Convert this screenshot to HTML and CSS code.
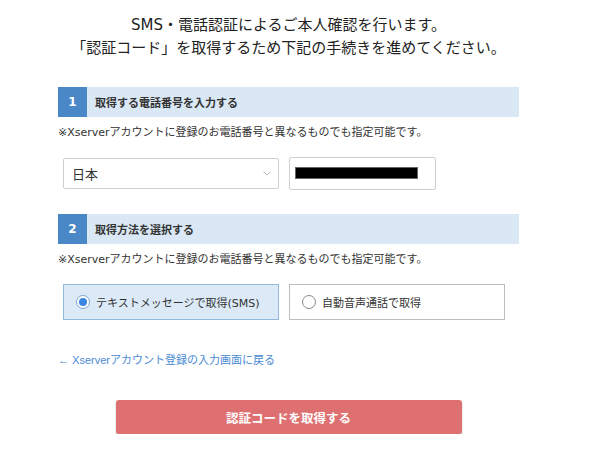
FILE: index.html
```html
<!DOCTYPE html>
<html lang="ja">
<head>
<meta charset="utf-8">
<link rel="stylesheet" href="styles.css">
</head>
<body>
<div class="page">
  <h1 class="title">SMS・電話認証によるご本人確認を行います。<br>「認証コード」を取得するため下記の手続きを進めてください。</h1>

  <div class="sec-head">
    <span class="num">1</span>
    <span class="sec-title">取得する電話番号を入力する</span>
  </div>
  <p class="note">※Xserverアカウントに登録のお電話番号と異なるものでも指定可能です。</p>
  <div class="row">
    <div class="select">
      <span>日本</span>
      <svg class="chev" width="8" height="5" viewBox="0 0 8 5"><path d="M0.5 0.5 L4 4 L7.5 0.5" fill="none" stroke="#b5b5b5" stroke-width="1"/></svg>
    </div>
    <div class="input"><span class="redact"></span></div>
  </div>

  <div class="sec-head sec2">
    <span class="num">2</span>
    <span class="sec-title">取得方法を選択する</span>
  </div>
  <p class="note">※Xserverアカウントに登録のお電話番号と異なるものでも指定可能です。</p>
  <div class="row radios">
    <label class="opt active"><span class="radio on"></span>テキストメッセージで取得(SMS)</label>
    <label class="opt"><span class="radio"></span>自動音声通話で取得</label>
  </div>

  <a class="back">← Xserverアカウント登録の入力画面に戻る</a>

  <div class="btn-wrap"><button class="btn">認証コードを取得する</button></div>
</div>
</body>
</html>
```

FILE: styles.css
```css
* { box-sizing: border-box; }
body {
  margin: 0;
  background: #fff;
  color: #333;
  font-family: "DejaVu Sans", "Noto Sans CJK JP", sans-serif;
  text-spacing-trim: space-all;
}
.page {
  width: 461px;
  margin-left: 58px;
  padding-top: 14px;
}
.title {
  margin: 0;
  font-size: 15px;
  font-weight: normal;
  line-height: 23px;
  text-align: center;
  white-space: nowrap;
  color: #222;
}
.sec-head {
  margin-top: 27px;
  height: 30px;
  background: #dae8f5;
  display: flex;
  align-items: center;
}
.sec2 { margin-top: 24px; }
.num {
  width: 29px;
  height: 30px;
  background: #4a87c7;
  color: #fff;
  font-weight: bold;
  font-size: 12px;
  display: flex;
  align-items: center;
  justify-content: center;
}
.sec-title {
  margin-left: 8px;
  font-size: 11px;
  font-weight: bold;
  color: #333;
}
.note {
  margin: 8px 0 0;
  font-size: 11px;
  line-height: 16px;
  color: #333;
}
.row {
  display: flex;
  gap: 10px;
  margin-top: 16px;
  margin-left: 5px;
  align-items: center;
}
.select {
  width: 216px;
  height: 31px;
  border: 1px solid #cfcfcf;
  border-radius: 2px;
  display: flex;
  align-items: center;
  justify-content: space-between;
  padding: 0 7px 0 8px;
  font-size: 13px;
  color: #333;
}
.input {
  width: 147px;
  height: 33px;
  border: 1px solid #cfcfcf;
  border-radius: 2px;
  padding: 9px 0 0 5px;
}
.redact {
  display: block;
  width: 123px;
  height: 12px;
  background: #000;
  border: 1px solid #666;
}
.radios { margin-top: 16px; }
.opt {
  width: 216px;
  height: 36px;
  border: 1px solid #bdbdbd;
  display: flex;
  align-items: center;
  padding-left: 12px;
  font-size: 11px;
  color: #333;
}
.opt.active {
  background: #dce9f6;
  border-color: #93b8df;
}
.radio {
  width: 14px;
  height: 14px;
  border: 1px solid #8a8a8a;
  border-radius: 50%;
  background: #fff;
  margin-right: 6px;
  display: flex;
  align-items: center;
  justify-content: center;
}
.radio.on { border-color: #7aa6d6; }
.radio.on::after {
  content: "";
  width: 8px;
  height: 8px;
  border-radius: 50%;
  background: #3b86e0;
}
.back {
  display: block;
  margin-top: 32px;
  font-family: "Liberation Sans", "Noto Sans CJK JP", sans-serif;
  font-size: 11px;
  line-height: 16px;
  color: #4a8ad4;
}
.btn-wrap {
  display: flex;
  justify-content: center;
  margin-top: 32px;
}
.btn {
  width: 346px;
  height: 34px;
  border: none;
  border-radius: 3px;
  background: #de7071;
  color: #fff;
  font-family: "Noto Sans CJK JP", sans-serif;
  font-weight: bold;
  font-size: 12.5px;
  box-shadow: 0 2px 2px rgba(0,0,0,0.25);
}
```
